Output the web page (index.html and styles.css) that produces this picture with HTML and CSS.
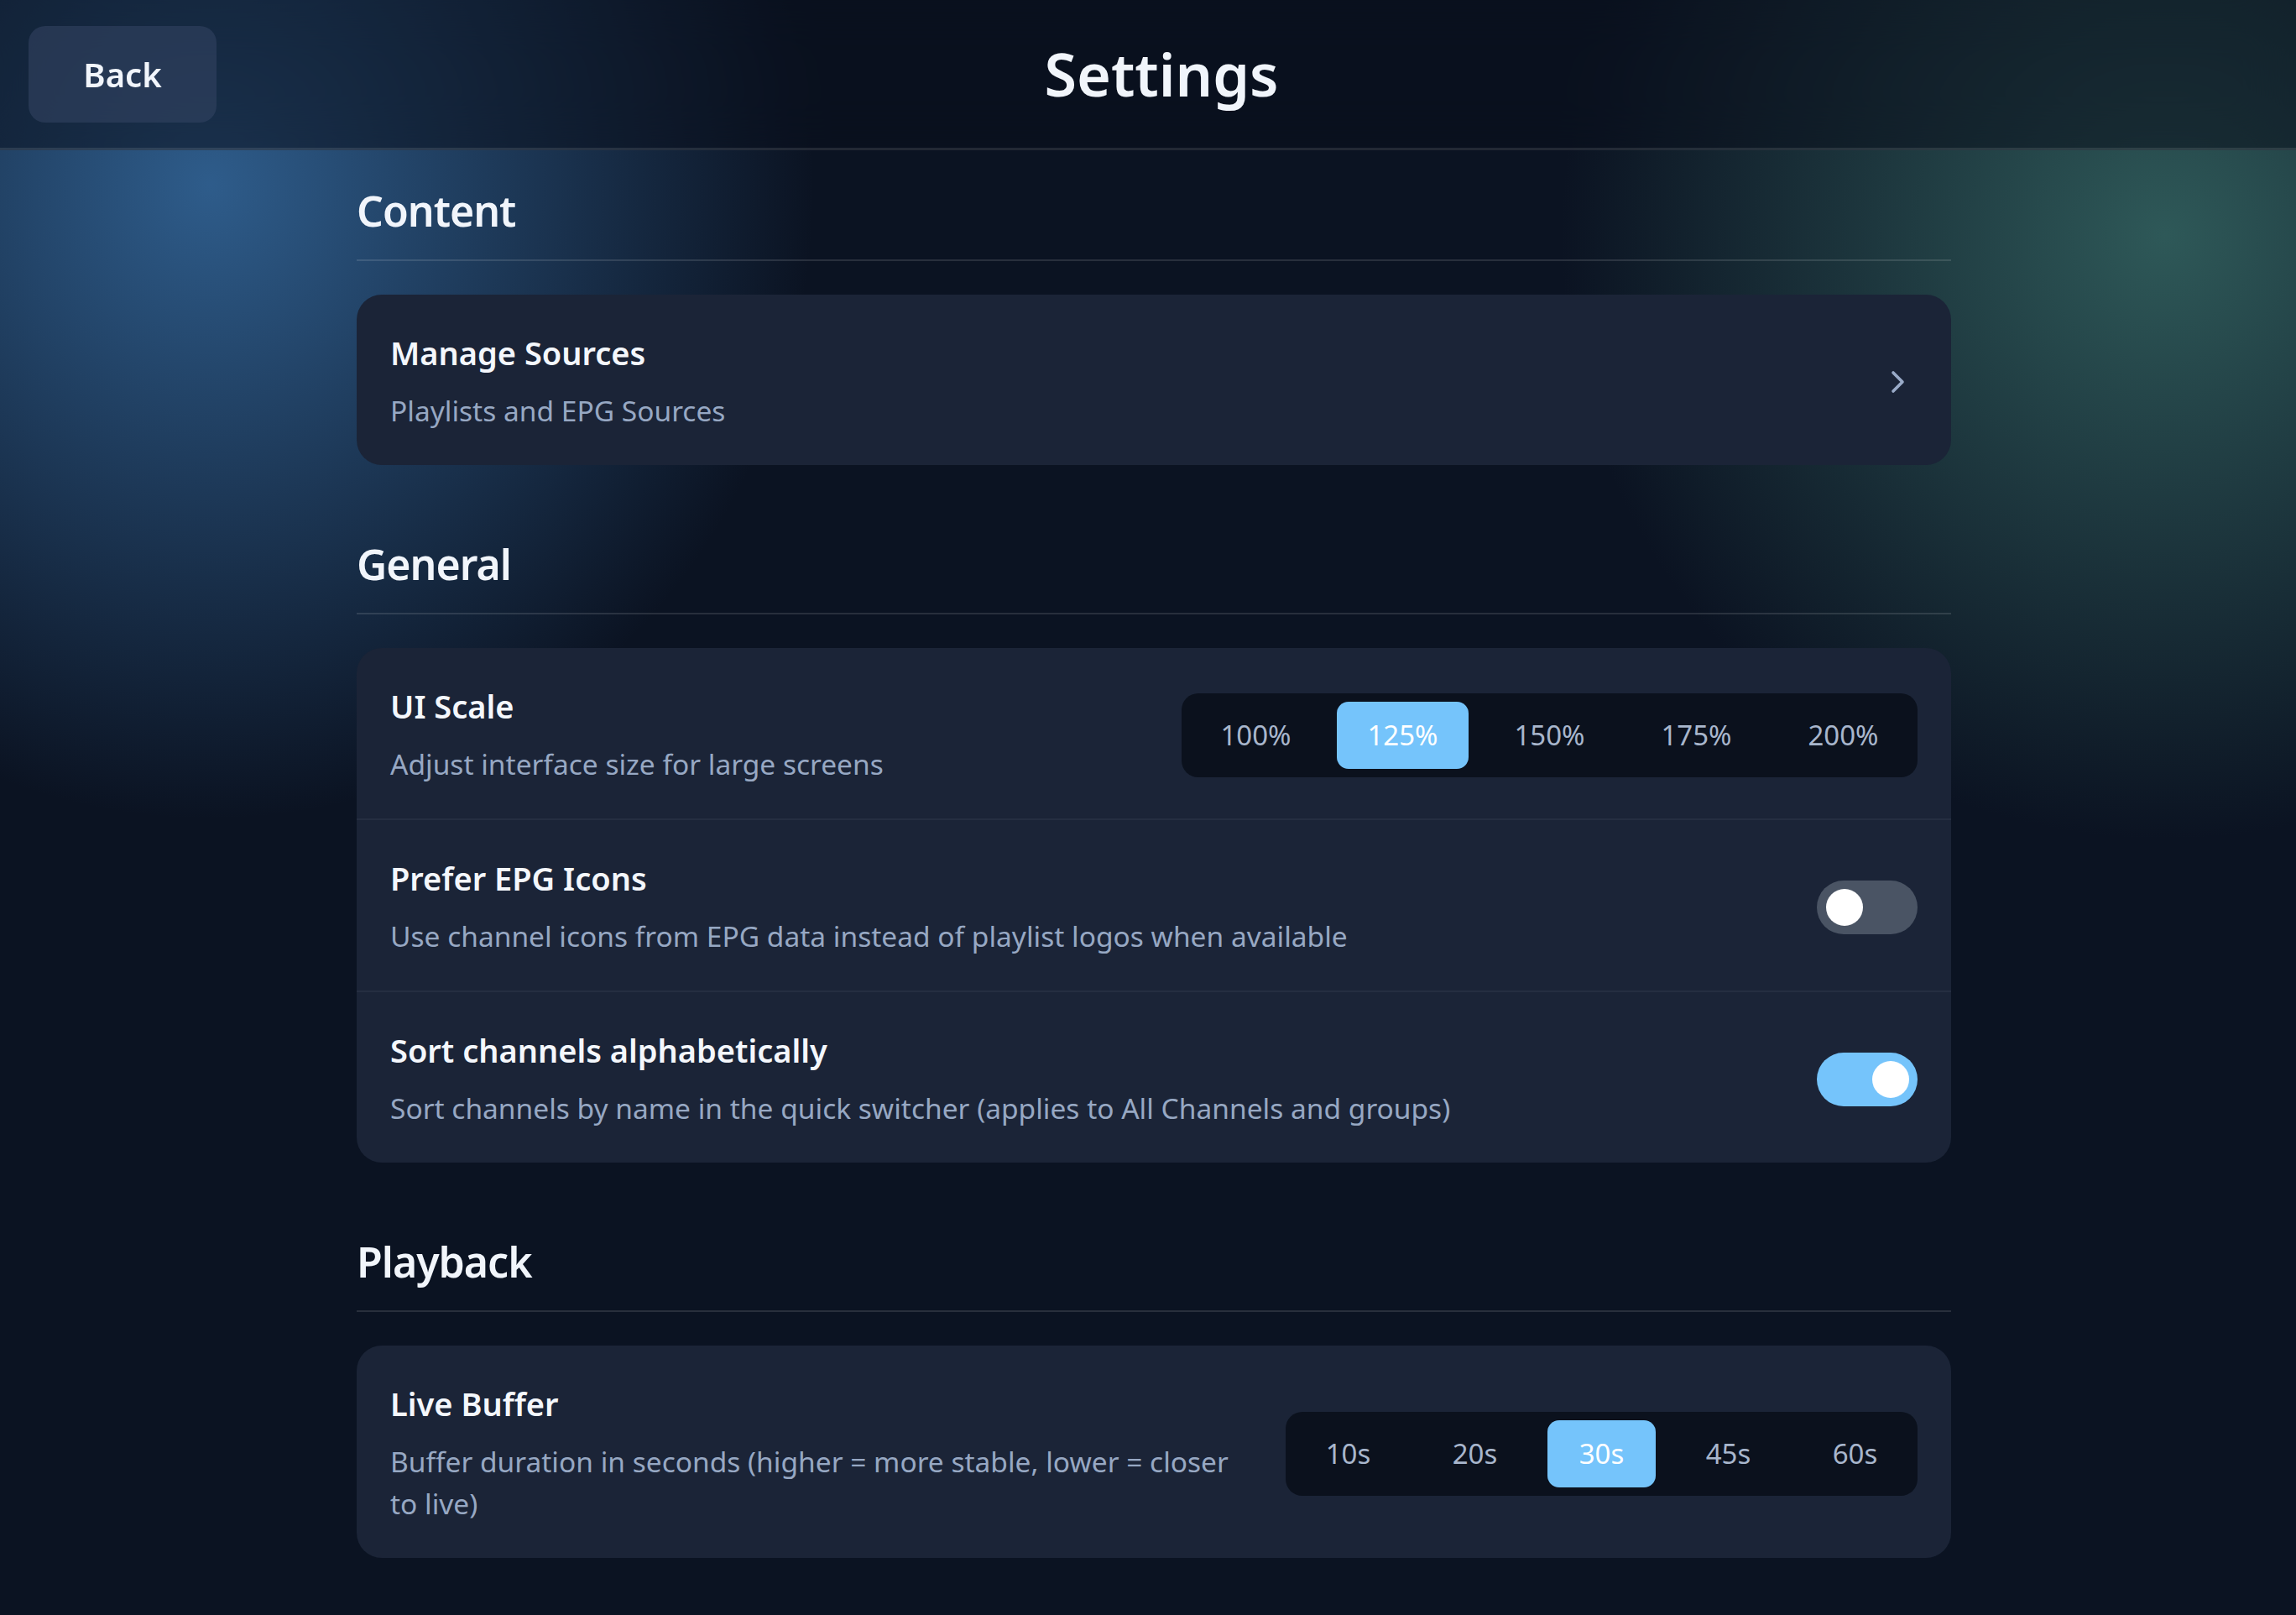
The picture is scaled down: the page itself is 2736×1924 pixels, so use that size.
FILE: index.html
```html
<!DOCTYPE html>
<html lang="en">
<head>
    <meta charset="UTF-8">
    <meta name="viewport" content="width=device-width, initial-scale=1.0">
    <title>Settings</title>
    <link rel="stylesheet" href="styles.css">
</head>
<body>
    <header class="topbar">
        <div class="topbar-left">
            <button class="back-button">Back</button>
        </div>
        <h1 class="page-title">Settings</h1>
        <div class="topbar-right"></div>
    </header>

    <main class="settings">
        <section class="settings-section">
            <h2 class="section-title">Content</h2>
            <div class="settings-card">
                <div class="setting-row setting-link">
                    <div class="setting-info">
                        <div class="setting-name">Manage Sources</div>
                        <div class="setting-desc">Playlists and EPG Sources</div>
                    </div>
                    <svg class="chevron" viewBox="0 0 24 24" fill="none" stroke="currentColor" stroke-width="1.8" stroke-linecap="round" stroke-linejoin="round">
                        <path d="M9.5 6.5l5.5 5.5-5.5 5.5"/>
                    </svg>
                </div>
            </div>
        </section>

        <section class="settings-section">
            <h2 class="section-title">General</h2>
            <div class="settings-card">
                <div class="setting-row">
                    <div class="setting-info">
                        <div class="setting-name">UI Scale</div>
                        <div class="setting-desc">Adjust interface size for large screens</div>
                    </div>
                    <div class="segmented segmented-scale">
                        <button class="seg-option">100%</button>
                        <button class="seg-option active">125%</button>
                        <button class="seg-option">150%</button>
                        <button class="seg-option">175%</button>
                        <button class="seg-option">200%</button>
                    </div>
                </div>
                <div class="setting-row">
                    <div class="setting-info">
                        <div class="setting-name">Prefer EPG Icons</div>
                        <div class="setting-desc">Use channel icons from EPG data instead of playlist logos when available</div>
                    </div>
                    <div class="toggle"><span class="toggle-knob"></span></div>
                </div>
                <div class="setting-row">
                    <div class="setting-info">
                        <div class="setting-name">Sort channels alphabetically</div>
                        <div class="setting-desc">Sort channels by name in the quick switcher (applies to All Channels and groups)</div>
                    </div>
                    <div class="toggle on"><span class="toggle-knob"></span></div>
                </div>
            </div>
        </section>

        <section class="settings-section">
            <h2 class="section-title">Playback</h2>
            <div class="settings-card">
                <div class="setting-row">
                    <div class="setting-info">
                        <div class="setting-name">Live Buffer</div>
                        <div class="setting-desc">Buffer duration in seconds (higher = more stable, lower = closer to live)</div>
                    </div>
                    <div class="segmented segmented-buffer">
                        <button class="seg-option">10s</button>
                        <button class="seg-option">20s</button>
                        <button class="seg-option active">30s</button>
                        <button class="seg-option">45s</button>
                        <button class="seg-option">60s</button>
                    </div>
                </div>
            </div>
        </section>
    </main>
</body>
</html>
```

FILE: styles.css
```css
/* Base page */
html, body {
    margin: 0;
    padding: 0;
}

body {
    min-height: 100vh;
    font-family: "Noto Sans", "Open Sans", sans-serif;
    color: #f1f5fb;
    background:
        radial-gradient(ellipse 1000px 1050px at 250px 220px, rgba(50, 100, 150, 0.9), rgba(50, 100, 150, 0) 72%),
        radial-gradient(ellipse 1000px 1000px at 2580px 280px, rgba(50, 96, 94, 0.9), rgba(50, 96, 94, 0) 72%),
        #0b1322;
}

/* Top bar */
.topbar {
    height: 176px;
    display: grid;
    grid-template-columns: 1fr auto 1fr;
    align-items: center;
    padding: 0 34px;
    background-color: rgba(9, 15, 27, 0.55);
    backdrop-filter: blur(30px);
    border-bottom: 3px solid rgba(255, 255, 255, 0.1);
}

.back-button {
    width: 224px;
    height: 115px;
    border: none;
    border-radius: 20px;
    background-color: rgba(50, 66, 96, 0.6);
    color: #f1f5fb;
    font-family: inherit;
    font-size: 40px;
    font-weight: 600;
    cursor: pointer;
}

.page-title {
    margin: 0 0 0 32px;
    font-size: 70px;
    font-weight: 600;
}

/* Sections */
.settings {
    width: 1900px;
    margin: 0 auto;
    padding: 42px 0 60px 14px;
}

.settings-section {
    margin-bottom: 88px;
}

.section-title {
    margin: 0 0 40px 0;
    padding-bottom: 28px;
    font-size: 50px;
    line-height: 60px;
    font-weight: 600;
    letter-spacing: -1px;
    border-bottom: 2px solid rgba(255, 255, 255, 0.12);
}

.settings-card {
    background-color: #1b2437;
    border-radius: 30px;
    overflow: hidden;
}

/* Rows */
.setting-row {
    display: flex;
    align-items: center;
    justify-content: space-between;
    gap: 40px;
    padding: 44px 40px 40px 40px;
}

.setting-row + .setting-row {
    border-top: 2px solid #252e41;
}

.setting-name {
    font-size: 38px;
    line-height: 50px;
    font-weight: 600;
    color: #f4f7fc;
}

.setting-desc {
    margin-top: 19px;
    font-size: 33.5px;
    line-height: 50px;
    color: #97a8c3;
}

.chevron {
    width: 48px;
    height: 48px;
    flex-shrink: 0;
    color: #9aabc8;
}

/* Segmented controls */
.segmented {
    display: flex;
    flex-shrink: 0;
    padding: 10px;
    background-color: #0b111d;
    border-radius: 20px;
}

.segmented-scale {
    gap: 18px;
}

.segmented-buffer {
    gap: 22px;
}

.seg-option {
    height: 80px;
    border: none;
    border-radius: 14px;
    background: none;
    color: #a8b6cc;
    font-family: inherit;
    font-size: 33px;
    cursor: pointer;
}

.segmented-scale .seg-option {
    width: 157px;
}

.segmented-buffer .seg-option {
    width: 129px;
}

.seg-option.active {
    background-color: #75c4fb;
    color: #ffffff;
}

/* Toggles */
.toggle {
    position: relative;
    width: 120px;
    height: 64px;
    flex-shrink: 0;
    border-radius: 32px;
    background-color: #4a5464;
}

.toggle-knob {
    position: absolute;
    top: 10px;
    left: 11px;
    width: 44px;
    height: 44px;
    border-radius: 50%;
    background-color: #ffffff;
}

.toggle.on {
    background-color: #75c4fb;
}

.toggle.on .toggle-knob {
    left: auto;
    right: 10px;
}
```
